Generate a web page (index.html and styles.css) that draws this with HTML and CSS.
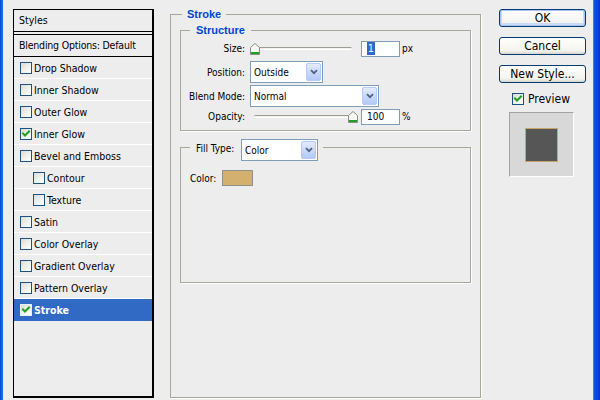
FILE: index.html
```html
<!DOCTYPE html>
<html>
<head>
<meta charset="utf-8">
<link rel="stylesheet" href="styles.css">
</head>
<body>
<div class="window">
  <div class="frame-left"></div>

  <div class="styles-panel">
    <div class="sp-head">Styles</div>
    <div class="sp-blend">Blending Options: Default</div>
    <div class="sp-item"><span class="cb"></span>Drop Shadow</div>
    <div class="sp-item"><span class="cb"></span>Inner Shadow</div>
    <div class="sp-item"><span class="cb"></span>Outer Glow</div>
    <div class="sp-item"><span class="cb checked"><svg viewBox="0 0 10 10"><path d="M2 4.5 L4 6.5 L8 2.5"/></svg></span>Inner Glow</div>
    <div class="sp-item"><span class="cb"></span>Bevel and Emboss</div>
    <div class="sp-item sub"><span class="cb"></span>Contour</div>
    <div class="sp-item sub"><span class="cb"></span>Texture</div>
    <div class="sp-item"><span class="cb"></span>Satin</div>
    <div class="sp-item"><span class="cb"></span>Color Overlay</div>
    <div class="sp-item"><span class="cb"></span>Gradient Overlay</div>
    <div class="sp-item"><span class="cb"></span>Pattern Overlay</div>
    <div class="sp-item selected"><span class="cb checked"><svg viewBox="0 0 10 10"><path d="M2 4.5 L4 6.5 L8 2.5"/></svg></span>Stroke</div>
  </div>

  <div class="main">
    <fieldset class="group outer">
      <legend class="title t-outer">Stroke</legend>

      <fieldset class="group inner structure">
        <legend class="title t-inner">Structure</legend>
        <div class="form">
          <div class="frow r1">
            <span class="lbl">Size:</span>
            <div class="slider">
              <div class="track"></div>
              <svg class="thumb thumb-min" viewBox="0 0 10 12"><path class="th-body" d="M0.5 11.5 V4.5 L5 0.5 L9.5 4.5 V11.5 Z"/><rect class="th-green" x="1" y="9" width="8" height="2"/></svg>
            </div>
            <div class="num"><span class="sel-txt">1</span></div>
            <span class="unit">px</span>
          </div>
          <div class="frow r2">
            <span class="lbl">Position:</span>
            <div class="select sel-pos">
              <span class="sel-value">Outside</span>
              <span class="sel-btn"><svg viewBox="0 0 8 6"><path d="M1 1.2 L4 4.2 L7 1.2"/></svg></span>
            </div>
          </div>
          <div class="frow r3">
            <span class="lbl">Blend Mode:</span>
            <div class="select sel-blend">
              <span class="sel-value">Normal</span>
              <span class="sel-btn"><svg viewBox="0 0 8 6"><path d="M1 1.2 L4 4.2 L7 1.2"/></svg></span>
            </div>
          </div>
          <div class="frow r4">
            <span class="lbl">Opacity:</span>
            <div class="slider">
              <div class="track"></div>
              <svg class="thumb thumb-max" viewBox="0 0 10 12"><path class="th-body" d="M0.5 11.5 V4.5 L5 0.5 L9.5 4.5 V11.5 Z"/><rect class="th-green" x="1" y="9" width="8" height="2"/></svg>
            </div>
            <div class="num">100</div>
            <span class="unit">%</span>
          </div>
        </div>
      </fieldset>

      <fieldset class="group inner fill">
        <legend class="fill-legend">
          <span class="fill-lbl">Fill Type:</span>
          <div class="select sel-fill">
            <span class="sel-value">Color</span>
            <span class="sel-btn"><svg viewBox="0 0 8 6"><path d="M1 1.2 L4 4.2 L7 1.2"/></svg></span>
          </div>
        </legend>
        <div class="fill-body">
          <div class="color-row">
            <span class="color-lbl">Color:</span>
            <span class="swatch"></span>
          </div>
        </div>
      </fieldset>
    </fieldset>
  </div>

  <div class="side">
    <div class="btn default">OK</div>
    <div class="btn">Cancel</div>
    <div class="btn">New Style...</div>
    <div class="preview-check"><span class="cb checked"><svg viewBox="0 0 10 10"><path d="M2 4.5 L4 6.5 L8 2.5"/></svg></span>Preview</div>
    <div class="preview"><div class="preview-swatch"></div></div>
  </div>

  <div class="frame-right"></div>
</div>
</body>
</html>
```

FILE: styles.css
```css
* { box-sizing: border-box; }
html, body { margin: 0; padding: 0; }
body {
  width: 600px;
  height: 400px;
  overflow: hidden;
  background: #EDEDED;
  font-family: "DejaVu Sans Condensed", "Liberation Sans", sans-serif;
  color: #000;
}
.window {
  display: flex;
  width: 600px;
  height: 400px;
  background: #EDEDED;
}
.frame-left {
  width: 3px;
  flex: none;
  background: linear-gradient(to right, #0A47D4, #1862EC 60%, #2C74F2);
}
.frame-right {
  width: 7px;
  flex: none;
  margin-left: auto;
  background: linear-gradient(to right, #3A7CF2 0, #3A7CF2 1px, #0C52E2 1px, #0848DA 4px, #0337C2 7px);
}

/* ---------- checkbox ---------- */
.cb {
  display: inline-flex;
  align-items: center;
  justify-content: center;
  flex: none;
  width: 12px;
  height: 12px;
  border: 1px solid #1C5180;
  background: linear-gradient(135deg, #DCDCD6, #F6F6F3 70%, #FFFFFF);
}
.cb svg { width: 10px; height: 10px; display: block; }
.cb svg path { fill: none; stroke: #21A121; stroke-width: 2; stroke-linecap: square; }

/* ---------- styles list ---------- */
.styles-panel {
  flex: none;
  margin: 9px 0 2px 10px;
  width: 141px;
  border: 1px solid #000;
  border-right-width: 2px;
  border-bottom-width: 2px;
  font-size: 10.5px;
  background: #EDEDED;
}
.sp-head {
  height: 22px;
  line-height: 21px;
  padding-left: 5px;
  border-bottom: 1px solid #000;
}
.sp-blend {
  margin-top: 2px;
  height: 23px;
  line-height: 21px;
  padding-left: 5px;
  border-top: 1px solid #000;
  border-bottom: 1px solid #000;
  letter-spacing: -0.2px;
}
.sp-item {
  height: 22px;
  display: flex;
  align-items: center;
  padding-left: 6px;
  border-bottom: 1px solid #FFFFFF;
}
.sp-item .cb { margin-right: 2px; }
.sp-item.sub { padding-left: 19px; }
.sp-item.selected {
  background: #316AC5;
  border-bottom-color: #316AC5;
  color: #FFFFFF;
  font-weight: bold;
}
.sp-item.selected .cb { border-color: #E8EEF8; }

/* ---------- main ---------- */
.main {
  flex: none;
  width: 311px;
  margin-left: 16px;
  padding: 7px 0 2px;
  display: flex;
  flex-direction: column;
}
fieldset.group {
  margin: 0;
  padding: 0;
  min-width: 0;
  border: 1px solid #A9A79B;
  box-shadow: 1px 1px 0 #FFFFFF;
}
fieldset.outer { flex: 1; }
.title {
  padding: 0 5px;
  font-family: "Liberation Sans", sans-serif;
  font-weight: bold;
  font-size: 11px;
  line-height: 14px;
  color: #0046D5;
}
.t-outer { margin-left: 11px; }
.t-inner { margin-left: 9px; padding: 0 6px; }
fieldset.inner { margin-left: 9px; width: 291px; }
fieldset.structure { margin-top: 2px; }
fieldset.fill { margin-top: 3px; }

.form { padding-bottom: 5px; }
.frow {
  display: flex;
  align-items: center;
  font-size: 10px;
}
.frow .lbl {
  width: 64px;
  margin-right: 5px;
  text-align: right;
}
.r1 { margin-top: 3px; height: 17px; }
.r2 { margin-top: 4px; height: 22px; }
.r3 { margin-top: 2px; height: 22px; }
.r4 { margin-top: 1px; height: 17px; }

.slider {
  position: relative;
  width: 109px;
  height: 17px;
  margin-right: 2px;
}
.track {
  margin: 7px 0 0 4px;
  width: 98px;
  height: 3px;
  border-radius: 2px;
  background: #F3F2EC;
  border-top: 1px solid #9D9D96;
  border-bottom: 1px solid #FFFFFF;
}
.thumb {
  position: absolute;
  top: 3px;
  width: 10px;
  height: 12px;
}
.thumb-min { left: 0; }
.thumb-max { left: 98px; }
.th-body { fill: #F7F7F4; stroke: #8C8C86; stroke-width: 1; }
.th-green { fill: #21A121; }

.num {
  width: 39px;
  height: 16px;
  border: 1px solid #7F9DB9;
  background: #FFFFFF;
  padding-left: 5px;
  line-height: 14px;
  font-size: 10px;
}
.sel-txt {
  display: inline-block;
  background: #316AC5;
  color: #FFFFFF;
  padding: 0 1px;
  line-height: 13px;
}
.unit { margin-left: 2px; font-size: 10px; }

.select {
  height: 22px;
  display: flex;
  align-items: center;
  border: 1px solid #7F9DB9;
  background: #FFFFFF;
  padding-left: 3px;
  font-size: 10px;
}
.sel-value { flex: 1; }
.sel-btn {
  flex: none;
  width: 15px;
  height: 18px;
  margin-right: 1px;
  border: 1px solid #B7CAF5;
  border-radius: 2px;
  background: linear-gradient(#E3EBFE, #C8D8FB 55%, #B4C8F6);
  display: flex;
  align-items: center;
  justify-content: center;
}
.sel-btn svg { width: 8px; height: 6px; display: block; }
.sel-btn path { fill: none; stroke: #4D6185; stroke-width: 1.8; }
.sel-pos { width: 73px; }
.sel-blend { width: 129px; }
.sel-fill { width: 77px; }

.fill-legend {
  margin-left: 9px;
  padding: 5px 5px 0 6px;
  display: flex;
  align-items: flex-start;
  font-size: 10px;
}
.fill-lbl {
  width: 45px;
  line-height: 19px;
}
.fill-body { height: 112px; }
.color-row {
  margin-top: 9px;
  padding-left: 9px;
  height: 16px;
  display: flex;
  align-items: center;
  font-size: 10px;
}
.color-lbl { width: 32px; }
.swatch {
  width: 31px;
  height: 16px;
  border: 1px solid #8F8F8B;
  background: #D4B06F;
}

/* ---------- side ---------- */
.side {
  flex: none;
  width: 87px;
  margin: 9px 0 0 18px;
  display: flex;
  flex-direction: column;
  font-size: 12px;
}
.btn {
  height: 18px;
  margin-bottom: 10px;
  border: 1px solid #003C74;
  border-radius: 3px;
  background: linear-gradient(#FFFFFF, #F3F3EE 80%, #D8D4CA);
  display: flex;
  align-items: center;
  justify-content: center;
}
.btn.default {
  box-shadow: inset 0 0 0 1px #A9C4F2, inset 0 -1px 0 2px #C9DAF8;
}
.preview-check {
  height: 12px;
  margin-left: 13px;
  display: flex;
  align-items: center;
}
.preview-check .cb { margin-right: 4px; }
.preview {
  width: 65px;
  height: 65px;
  margin: 7px 0 0 10px;
  border: 1px solid;
  border-color: #A3A3A3 #FFFFFF #FFFFFF #A3A3A3;
  background: #D8D8D8;
  display: flex;
  align-items: center;
  justify-content: center;
}
.preview-swatch {
  width: 33px;
  height: 34px;
  background: #565656;
  border: 1px solid #C8A467;
}
```
